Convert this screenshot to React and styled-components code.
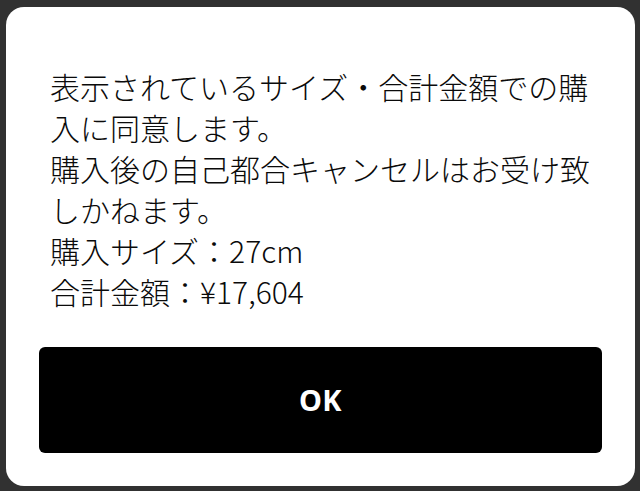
import React from "react";
import styled, { createGlobalStyle } from "styled-components";

const Global = createGlobalStyle`
  html, body { margin: 0; padding: 0; }
  body {
    background: #313131;
    font-family: "Noto Sans CJK JP", "Noto Sans", sans-serif;
  }
`;

const Overlay = styled.div`
  width: 640px;
  height: 491px;
  box-sizing: border-box;
  padding: 7px 5px 5px 6px;
  background: #313131;
`;

const Card = styled.div`
  width: 629px;
  height: 479px;
  box-sizing: border-box;
  background: #ffffff;
  border-radius: 18px;
  display: flex;
  flex-direction: column;
  padding: 59px 33px 33px 33px;
`;

const Message = styled.div`
  padding: 0 11px;
  font-size: 30px;
  line-height: 41px;
  color: #0a0a0a;
  font-weight: 300;
`;

const Line = styled.p`
  margin: 0;
`;

const OkButton = styled.button`
  margin-top: auto;
  width: 563px;
  height: 106px;
  border: none;
  border-radius: 6px;
  background: #000;
  color: #fff;
  font-family: "Noto Sans", "Liberation Sans", sans-serif;
  font-weight: 700;
  font-size: 29px;
  letter-spacing: 0.5px;
  padding-bottom: 2px;
  cursor: pointer;
`;

export default function App() {
  return (
    <>
      <Global />
      <Overlay>
        <Card>
          <Message>
            <Line>表示されているサイズ・合計金額での購入に同意します。</Line>
            <Line>購入後の自己都合キャンセルはお受け致しかねます。</Line>
            <Line>購入サイズ：27cm</Line>
            <Line>合計金額：¥17,604</Line>
          </Message>
          <OkButton>OK</OkButton>
        </Card>
      </Overlay>
    </>
  );
}
